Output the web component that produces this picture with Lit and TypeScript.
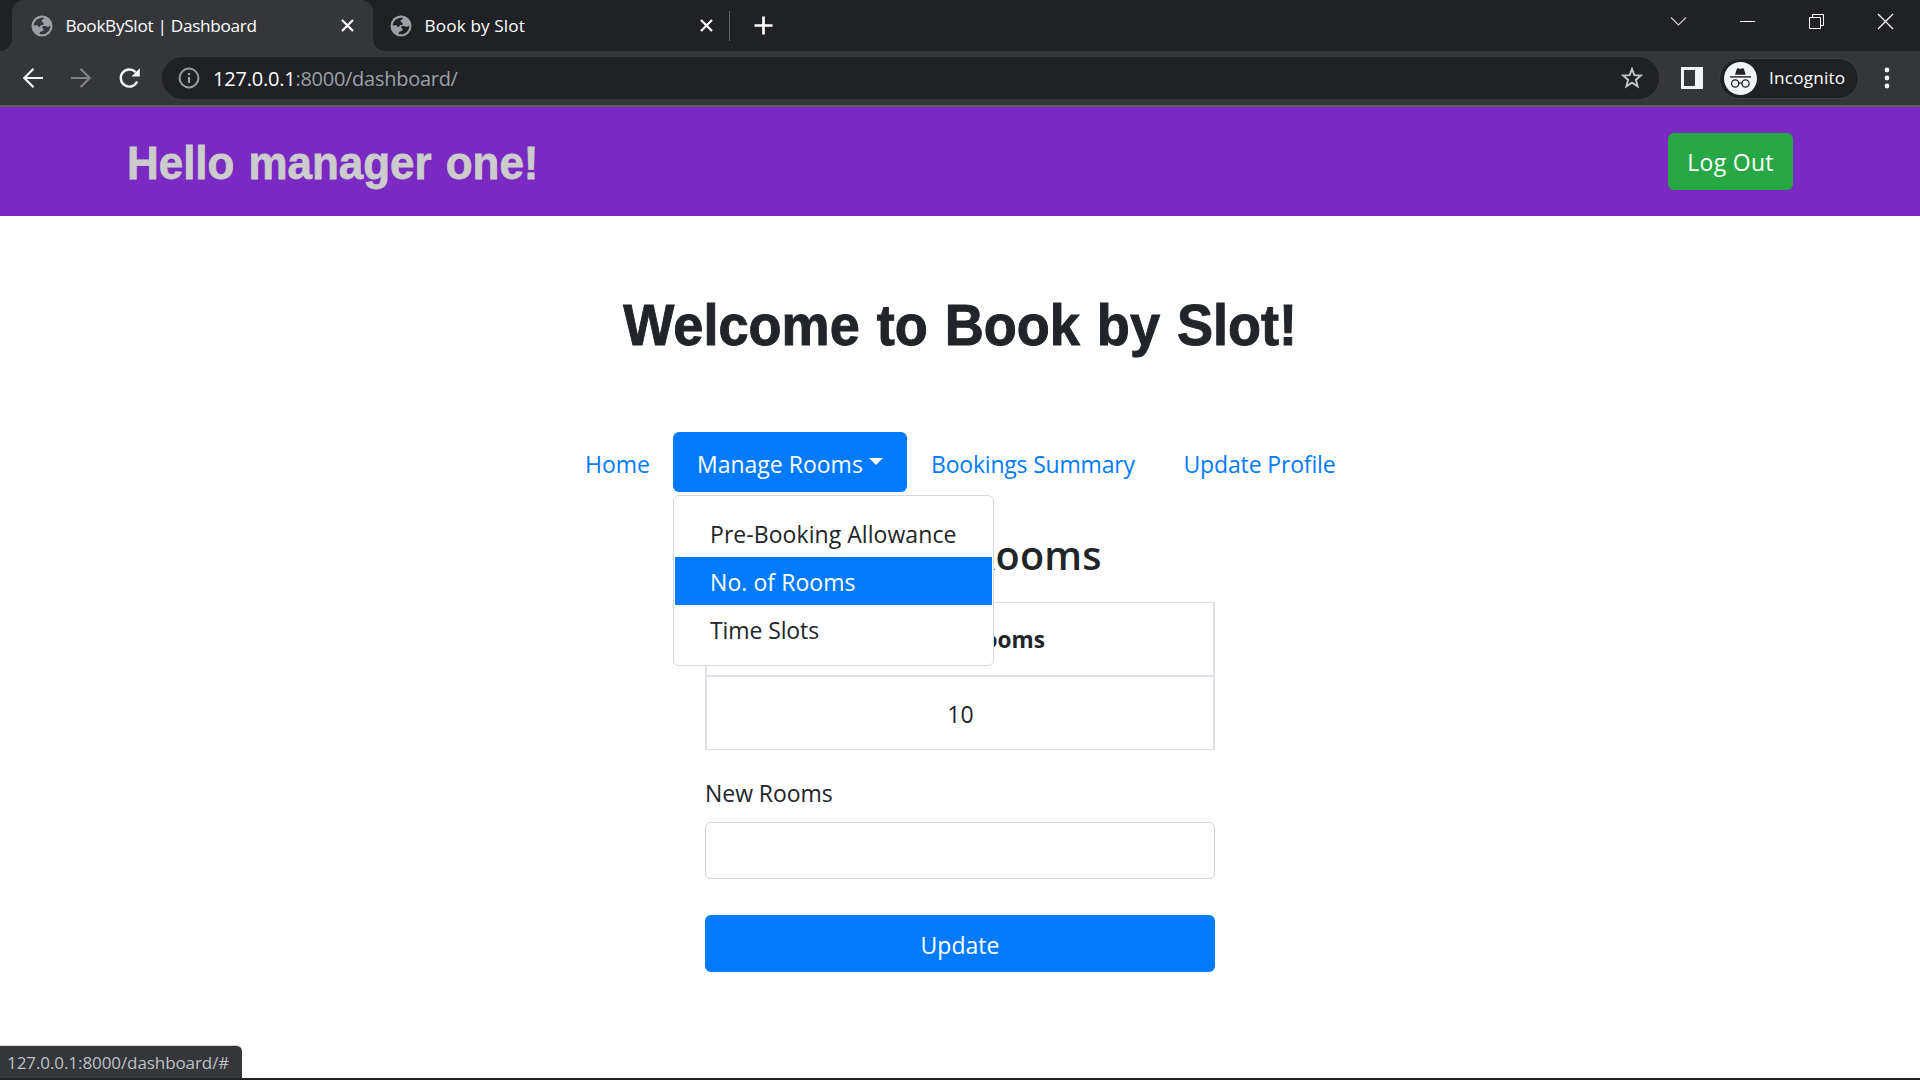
import { LitElement, html, css, svg } from "lit";
import { customElement, state } from "lit/decorators.js";
import { classMap } from "lit/directives/class-map.js";

const globe = html`<svg class="globe" width="22" height="22" viewBox="0 0 22 22">
  <circle cx="11" cy="11" r="10.5" fill="#9aa0a6" />
  <path class="sea" d="M2.7 10.4C3.1 6.200 6.500 2.900 10.900 2.700C12 2.700 12.700 2.900 13.200 3.100C13 4.500 10.600 4.500 10.500 6C10.400 7.400 12.700 7 12.800 8.800C12.900 10.500 10.900 9.800 10 10.300C9.200 10.800 9.500 12 8.300 12C6.900 12 7.600 10.400 6 10.300Z" />
  <path class="sea" d="M19.300 10.400C19.500 15.300 15.800 19.200 11 19.300C10.200 19.300 9.300 19.200 8.600 18.900C8.600 17.200 9 16.600 10.300 16.400C12 16.200 12.700 15.800 12.600 14.600C12.500 13.400 11.200 13.600 11.200 12.300C11.200 10.900 13.400 10.800 14.500 11.100C15.800 11.500 16.200 12.100 17.300 11.800C18.200 11.500 18.300 10.500 19.300 10.400Z" />
</svg>`;

const cross = html`<svg width="13" height="13" viewBox="0 0 13 13">
  <path d="M1 1L12 12M12 1L1 12" stroke="#fff" stroke-width="2.2" />
</svg>`;

@customElement("browser-chrome")
export class BrowserChrome extends LitElement {
  static styles = css`
    :host { display: block; font-family: "Open Sans", "Noto Sans", sans-serif; color: #fff; }
    svg { display: block; flex: none; }
    .strip { display: flex; height: 51px; padding-left: 12px; background: #202124; }
    .tab { display: flex; align-items: center; box-sizing: border-box; width: 361px; height: 51px; padding: 0 19px 0 19px; font-size: 17.2px; line-height: 51px; }
    .tab .sea { fill: #202124; }
    .tab.active { position: relative; background: #35363a; border-radius: 12px 12px 0 0; }
    .tab.active .sea { fill: #35363a; }
    .tab.active::before, .tab.active::after { content: ""; position: absolute; bottom: 0; width: 12px; height: 12px; }
    .tab.active::before { left: -12px; background: radial-gradient(circle at 0 0, #202124 11.5px, #35363a 12.5px); }
    .tab.active::after { right: -12px; background: radial-gradient(circle at 100% 0, #202124 11.5px, #35363a 12.5px); }
    .title { flex: 1; margin-left: 12.500px; white-space: nowrap; letter-spacing: -0.3px; }
    .tab.second { width: 356px; padding: 0 16px 0 17px; }
    .second .title { letter-spacing: 0.12px; }
    .sep { width: 1px; height: 30px; margin-top: 11px; background: #5f6368; }
    .new { margin: 16px 0 0 24px; }
    .controls { display: flex; align-items: flex-start; margin-left: auto; padding: 13px 26px 0 0; gap: 52px; }
    .bar { display: flex; align-items: center; box-sizing: border-box; height: 54px; padding: 0 27px 0 22px; background: #35363a; }
    .nav { display: flex; align-items: center; gap: 26px; width: 140px; }
    .url { display: flex; align-items: center; box-sizing: border-box; width: 1497px; height: 42px; padding: 0 16px 0 16px; border-radius: 21px; background: #202124; font-size: 20px; line-height: 41px; letter-spacing: -0.22px; }
    .url span { padding-top: 1px; }
    .host { margin-left: 13px; }
    .path { flex: 1; color: #9aa0a6; letter-spacing: -0.27px; }
    .panel { margin-left: 22px; }
    .badge { display: flex; align-items: center; box-sizing: border-box; width: 140px; height: 41px; margin: 0 auto 0 16px; padding-left: 4px; border: 1px solid #3f4044; border-radius: 21px; background: #202124; font-size: 17.2px; letter-spacing: 0.2px; }
    .badge span { margin-left: 12px; padding-bottom: 1px; }
    .edge { height: 2px; background: #5f6063; }
  `;

  render() {
    return html`
      <div class="strip">
        <div class="tab active">${globe}<span class="title">BookBySlot | Dashboard</span>${cross}</div>
        <div class="tab second">${globe}<span class="title">Book by Slot</span>${cross}</div>
        <div class="sep"></div>
        <svg class="new" width="19" height="19" viewBox="0 0 19 19"><path d="M9.500 .500V18.500M.500 9.500H18.500" stroke="#fff" stroke-width="2.700" /></svg>
        <div class="controls">
          <svg width="17" height="17" viewBox="0 0 17 17"><path d="M1 4.500L8.500 12L16 4.500" fill="none" stroke="#d0d0d1" stroke-width="1.100" /></svg>
          <svg width="17" height="17" viewBox="0 0 17 17"><path d="M1 8.500H16" stroke="#fff" /></svg>
          <svg width="17" height="17" viewBox="0 0 17 17"><path d="M1.500 4.500H12.500V15.500H1.500ZM4.500 4V1.500H15.500V12.500H13" fill="none" stroke="#fff" /></svg>
          <svg width="17" height="17" viewBox="0 0 17 17"><path d="M1 1L16 16M16 1L1 16" stroke="#fff" stroke-width="1.200" /></svg>
        </div>
      </div>
      <div class="bar">
        <div class="nav">
          <svg width="22" height="22" viewBox="0 0 22 22"><path d="M21 11H3M11.500 1.800L2.300 11L11.500 20.200" fill="none" stroke="#f1f3f4" stroke-width="2.200" /></svg>
          <svg width="22" height="22" viewBox="0 0 22 22"><path d="M1 11H19M10.500 1.800L19.700 11L10.500 20.200" fill="none" stroke="#808185" stroke-width="2.200" /></svg>
          <svg width="24" height="24" viewBox="0 0 24 24"><path d="M19.200 15.600A8.600 8.600 0 1 1 17.600 6.100" fill="none" stroke="#f1f3f4" stroke-width="2.400" /><path d="M21.800 2.200V10.500H13.500Z" fill="#f1f3f4" /></svg>
        </div>
        <div class="url">
          <svg width="22" height="22" viewBox="0 0 22 22"><circle cx="11" cy="11" r="9.400" fill="none" stroke="#9aa0a6" stroke-width="2" /><path d="M11 10V16M11 6V8.200" stroke="#9aa0a6" stroke-width="2.200" /></svg>
          <span class="host">127.0.0.1</span><span class="path">:8000/dashboard/</span>
          <svg width="22" height="22" viewBox="0 0 22 22"><path d="M11 2L13.300 8.100L20 8.500L14.900 12.700L16.600 19.300L11 15.600L5.400 19.300L7.100 12.700L2 8.500L8.700 8.100Z" fill="none" stroke="#c4c6c9" stroke-width="1.900" /></svg>
        </div>
        <svg class="panel" width="22" height="22" viewBox="0 0 22 22"><rect width="22" height="22" fill="#f1f3f4" /><rect x="3" y="3" width="11" height="16" fill="#35363a" /></svg>
        <div class="badge">
          <svg width="33" height="33" viewBox="0 0 33 33">
            <circle cx="16.500" cy="16.500" r="16.500" fill="#f1f3f4" />
            <path d="M11 12.800L12.900 6.800C13.100 6.200 13.700 6.100 14.200 6.300L16.300 7L18.500 6.300C19 6.100 19.600 6.200 19.800 6.800L21.700 12.800Z" fill="#202124" />
            <path d="M6 14.900H27" stroke="#202124" stroke-width="1.400" />
            <g fill="none" stroke="#202124" stroke-width="1.300"><circle cx="11.200" cy="21.500" r="3.600" /><circle cx="21.500" cy="21.500" r="3.600" /><path d="M14.800 21.200Q16.300 20.400 17.900 21.200" /></g>
          </svg>
          <span>Incognito</span>
        </div>
        <svg width="12" height="22" viewBox="0 0 12 22">${[3, 11, 19].map((y) => svg`<circle cx="6" cy=${y} r="2.400" fill="#f1f3f4" />`)}</svg>
      </div>
      <div class="edge"></div>`;
  }
}

@customElement("app-root")
export class AppRoot extends LitElement {
  static styles = css`
    :host { display: block; font-family: "Open Sans", "Noto Sans", sans-serif; font-size: 23px; color: #212529; }
    * { box-sizing: border-box; }
    .page { position: relative; display: flex; flex-direction: column; width: 1920px; height: 1080px; overflow: hidden; background: #fff; }
    h1, h2, h3 { margin: 0; }
    header { display: flex; align-items: center; justify-content: space-between; height: 109px; padding: 0 127px 0 127px; background: #7a29c3; }
    header h2 { padding-top: 3px; font: bold 46px/60px "Liberation Sans", Arial, sans-serif; word-spacing: 2px; color: #ccc; -webkit-text-stroke: 0.8px #ccc; transform: scaleX(0.955); transform-origin: 0 50%; }
    button { border: 0; border-radius: 6px; font: inherit; color: #fff; }
    .logout { width: 125px; height: 57px; padding: 0; background: #28a745; letter-spacing: 0.3px; }
    main { flex: 1; display: flex; flex-direction: column; align-items: center; padding-top: 73px; }
    h1 { font: bold 58px/72px "Liberation Sans", Arial, sans-serif; word-spacing: 2px; -webkit-text-stroke: 1px #212529; transform: scaleX(0.933); }
    nav { display: flex; margin-top: 71px; }
    .item { position: relative; display: flex; }
    .link { display: flex; align-items: center; width: 100%; height: 60px; padding: 3px 24px 0; border-radius: 6px; white-space: nowrap; color: #007bff; text-decoration: none; }
    .link.active { background: #007bff; color: #fff; }
    .home { width: 112px; } .home .link { letter-spacing: 0; }
    .manage { width: 234px; }
    .bookings { width: 252.500px; } .bookings .link { letter-spacing: -0.2px; }
    .profile { width: 199.500px; } .profile .link { letter-spacing: -0.15px; }
    .caret { margin: -5px 0 0 6px; border: solid transparent; border-width: 7px 7px 0; border-top-color: #fff; }
    .menu { position: absolute; z-index: 2; top: 63px; left: 0; width: 321px; height: 171px; padding: 13px 1px 0; border: 1px solid #d6d8da; border-radius: 6px; background: #fff; }
    .option { height: 48px; padding: 1px 0 0 35px; line-height: 48px; letter-spacing: 0.06px; white-space: nowrap; }
    .option.on { background: #007bff; color: #fff; }
    .option.tight { letter-spacing: -0.1px; }
    .form { display: flex; flex-direction: column; width: 510px; }
    h3 { margin: 38px 0 22px; text-align: center; font-size: 39.600px; font-weight: 600; line-height: 50px; letter-spacing: 0.2px; }
    .table { border: solid #dee2e6; border-width: 1px 2px; text-align: center; line-height: 72px; }
    .th { height: 74px; padding-top: 2px; border-bottom: 2px solid #dee2e6; font-size: 22.600px; font-weight: bold; line-height: 70px; }
    .td { height: 72px; padding: 1px 0 0 1px; }
    label { margin: 25px 0 11px; line-height: 36px; letter-spacing: -0.05px; }
    input { width: 100%; height: 57px; padding: 0 18px; border: 1px solid #ced4da; border-radius: 6px; font: inherit; outline: 0; }
    .update { height: 57px; margin-top: 36px; padding: 3px 0 0; background: #007bff; }
    .base { height: 2px; background: #202124; }
    .status { position: absolute; left: 0; bottom: 2px; width: 242px; height: 33px; padding-left: 7px; border-top: 1px solid #cfd0d1; border-radius: 0 6px 0 0; background: #35363a; color: #bdc1c6; font-size: 17px; line-height: 33px; letter-spacing: -0.08px; white-space: nowrap; }
  `;

  @state() private selected = "No. of Rooms";

  render() {
    return html`<div class="page">
      <browser-chrome></browser-chrome>
      <header><h2>Hello manager one!</h2><button class="logout">Log Out</button></header>
      <main>
        <h1>Welcome to Book by Slot!</h1>
        <nav>
          <div class="item home"><a class="link">Home</a></div>
          <div class="item manage">
            <a class="link active">Manage Rooms<i class="caret"></i></a>
            <div class="menu">
              ${["Pre-Booking Allowance", "No. of Rooms", "Time Slots"].map((name) => html`<div
                class=${classMap({ option: true, on: name === this.selected, tight: name === "Time Slots" })}
                @click=${() => (this.selected = name)}>${name}</div>`)}
            </div>
          </div>
          <div class="item bookings"><a class="link">Bookings Summary</a></div>
          <div class="item profile"><a class="link">Update Profile</a></div>
        </nav>
        <div class="form">
          <h3>Update Rooms</h3>
          <div class="table"><div class="th">Current Rooms</div><div class="td">10</div></div>
          <label for="rooms">New Rooms</label>
          <input id="rooms" />
          <button class="update">Update</button>
        </div>
      </main>
      <div class="base"></div>
      <div class="status">127.0.0.1:8000/dashboard/#</div>
    </div>`;
  }
}
